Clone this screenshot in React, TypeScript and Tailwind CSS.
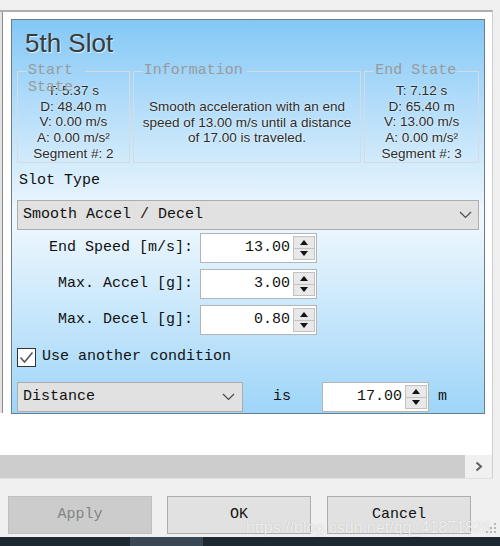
import React from "react";

const mono = "font-['Liberation_Mono',monospace]";

function Chevron() {
  return (
    <svg width="13" height="8" viewBox="0 0 13 8">
      <polyline points="1,1 6.5,6.5 12,1" fill="none" stroke="#4a4a4a" strokeWidth="1.2" />
    </svg>
  );
}

function Spinner() {
  return (
    <div className="flex flex-col w-[23px] self-stretch py-[2px] pr-[1px]">
      <div className="flex-1 flex items-center justify-center border border-[#c2c2c2] bg-[#e8e8e8]">
        <svg width="8" height="5" viewBox="0 0 8 5">
          <path d="M4 0L8 5H0z" fill="#111" />
        </svg>
      </div>
      <div className="flex-1 flex items-center justify-center border border-t-0 border-[#c2c2c2] bg-[#e8e8e8]">
        <svg width="8" height="5" viewBox="0 0 8 5">
          <path d="M0 0H8L4 5z" fill="#111" />
        </svg>
      </div>
    </div>
  );
}

function NumberBox({ value, className }: { value: string; className: string }) {
  return (
    <div className={`h-[30px] flex items-stretch border border-[#b4b4b4] bg-white ${className}`}>
      <div className={`flex-1 flex items-center justify-end pr-[3px] text-[15px] text-[#111] ${mono}`}>
        {value}
      </div>
      <Spinner />
    </div>
  );
}

function Group({
  legend,
  gapClass,
  className,
  children,
}: {
  legend: React.ReactNode;
  gapClass: string;
  className: string;
  children: React.ReactNode;
}) {
  return (
    <div className={`flex flex-col h-[92px] ${className}`}>
      <div className="flex h-px shrink-0">
        <div className="w-[10px] bg-[#d3dce2]" />
        <div className={`relative ${gapClass}`}>
          <span
            className={`absolute left-[1px] -top-[9px] leading-[17px] text-[15px] text-[#9a9a9a] whitespace-nowrap ${mono}`}
          >
            {legend}
          </span>
        </div>
        <div className="flex-1 bg-[#d3dce2]" />
      </div>
      <div className="flex-1 border-x border-b border-[#d3dce2] text-center text-[13.5px] leading-[15.65px] text-[#2b2b2b] [text-shadow:0_0_2px_#ffffff]">
        {children}
      </div>
    </div>
  );
}

function FieldRow({ label, value }: { label: string; value: string }) {
  return (
    <div className="flex items-center h-[30px]">
      <div className={`w-[176px] text-right text-[15px] text-[#111] ${mono}`}>{label}</div>
      <NumberBox value={value} className="ml-[7px] w-[117px]" />
    </div>
  );
}

export default function App() {
  return (
    <div className="relative w-[500px] h-[546px] bg-[#f0f0f0] flex flex-col overflow-hidden font-['Liberation_Sans',sans-serif]">
      <div className="h-[10px] shrink-0" />

      {/* scroll view */}
      <div className="w-[493px] shrink-0 flex flex-col bg-white border-t-2 border-t-[#aeaeae] border-r border-r-[#cfcfcf] border-b border-b-[#e2e2e2]">
        <div className="h-[443px] flex items-start">
          <div className="w-[3px] h-[401px] bg-[#e2e2e2] border-r border-[#8c8c8c]" />

          <div className="ml-[8px] mt-[7px] w-[474px] flex flex-col pt-[10px] pb-[1px] border border-[#6d7c8b] bg-[linear-gradient(180deg,#84c8f6_0%,#f0f8fe_50%,#9ed5f8_100%)]">
            <div className="pl-[13px] h-[26px] text-[26px] leading-[26px] text-[#3b3b3b] [text-shadow:1px_1px_1px_rgba(255,255,255,0.7)]">
              5th Slot
            </div>

            <div className="mt-[15px] px-[5px] flex gap-[3px]">
              <Group
                legend={
                  <>
                    Start
                    <br />
                    State
                  </>
                }
                gapClass="w-[58px]"
                className="w-[113px]"
              >
                <div className="pt-[11px]">
                  <div>T: 5.37 s</div>
                  <div>D: 48.40 m</div>
                  <div>V: 0.00 m/s</div>
                  <div>A: 0.00 m/s²</div>
                  <div>Segment #: 2</div>
                </div>
              </Group>
              <Group legend="Information" gapClass="w-[104px]" className="w-[229px]">
                <div className="pt-[27px]">
                  <div>Smooth acceleration with an end</div>
                  <div>speed of 13.00 m/s until a distance</div>
                  <div>of 17.00 is traveled.</div>
                </div>
              </Group>
              <Group legend="End State" gapClass="w-[83px]" className="w-[115px]">
                <div className="pt-[11px]">
                  <div>T: 7.12 s</div>
                  <div>D: 65.40 m</div>
                  <div>V: 13.00 m/s</div>
                  <div>A: 0.00 m/s²</div>
                  <div>Segment #: 3</div>
                </div>
              </Group>
            </div>

            <div className={`mt-[9px] ml-[7px] h-[17px] leading-[17px] text-[15px] text-[#111] ${mono}`}>
              Slot Type
            </div>

            <div
              className={`mt-[11px] mx-[5px] w-[462px] h-[30px] border border-[#adadad] bg-[#e1e1e1] flex items-center justify-between pl-[5px] pr-[6px] text-[15px] text-[#111] ${mono}`}
            >
              <span>Smooth Accel / Decel</span>
              <Chevron />
            </div>

            <div className="mt-[3px] px-[5px] flex flex-col gap-[6px]">
              <FieldRow label="End Speed [m/s]:" value="13.00" />
              <FieldRow label="Max. Accel [g]:" value="3.00" />
              <FieldRow label="Max. Decel [g]:" value="0.80" />
            </div>

            <div className="mt-[12px] px-[5px] h-[20px] flex items-center">
              <div className="w-[19px] h-[19px] border border-[#333] bg-white flex items-center justify-center">
                <svg width="15" height="13" viewBox="0 0 15 13">
                  <polyline points="1.5,6.5 5.5,11 13.5,1.5" fill="none" stroke="#555" strokeWidth="1.5" />
                </svg>
              </div>
              <span className={`ml-[6px] text-[15px] text-[#111] ${mono}`}>Use another condition</span>
            </div>

            <div className="mt-[15px] px-[5px] h-[30px] flex items-center">
              <div
                className={`w-[226px] h-[30px] border border-[#adadad] bg-[#e1e1e1] flex items-center justify-between pl-[5px] pr-[7px] text-[15px] text-[#111] ${mono}`}
              >
                <span>Distance</span>
                <Chevron />
              </div>
              <span className={`ml-[30px] text-[15px] text-[#111] ${mono}`}>is</span>
              <NumberBox value="17.00" className="ml-[31px] w-[107px]" />
              <span className={`ml-[9px] text-[15px] text-[#111] ${mono}`}>m</span>
            </div>
          </div>
        </div>

        {/* horizontal scrollbar */}
        <div className="h-[23px] flex">
          <div className="w-[465px] bg-[#cdcdcd]" />
          <div className="flex-1 bg-[#f0f0f0] flex items-center justify-center">
            <svg width="8" height="11" viewBox="0 0 8 11">
              <polyline points="1.5,1.5 6,5.5 1.5,9.5" fill="none" stroke="#606060" strokeWidth="2" />
            </svg>
          </div>
        </div>
      </div>

      {/* dialog buttons */}
      <div className={`pt-[17px] pl-[8px] flex text-[15px] ${mono}`}>
        <button className="w-[144px] h-[38px] bg-[#cccccc] border border-[#bfbfbf] text-[#838383]">Apply</button>
        <button className="ml-[15px] w-[144px] h-[38px] bg-[#e1e1e1] border border-[#adadad] text-[#111]">OK</button>
        <button className="ml-[16px] w-[144px] h-[38px] bg-[#e1e1e1] border border-[#adadad] text-[#111]">Cancel</button>
      </div>

      <div className="flex-1" />
      <div className="h-[9px] flex shrink-0">
        <div className="w-[130px] bg-[#1d2833]" />
        <div className="w-[73px] bg-[#3a4855]" />
        <div className="flex-1 bg-[#1d2833]" />
      </div>

      {/* watermark */}
      <div className="absolute left-[246px] top-[519px] text-[16px] leading-[18px] text-white/80 [text-shadow:0_0_1px_rgba(0,0,0,0.25)] whitespace-nowrap">
        https://blog.csdn.net/qq_41871826
      </div>
      <svg className="absolute right-[3px] top-[522px]" width="12" height="12" viewBox="0 0 12 12">
        <g fill="#b8b8b8">
          <rect x="9" y="1" width="2" height="2" />
          <rect x="5" y="5" width="2" height="2" />
          <rect x="9" y="5" width="2" height="2" />
          <rect x="1" y="9" width="2" height="2" />
          <rect x="5" y="9" width="2" height="2" />
          <rect x="9" y="9" width="2" height="2" />
        </g>
      </svg>
    </div>
  );
}
